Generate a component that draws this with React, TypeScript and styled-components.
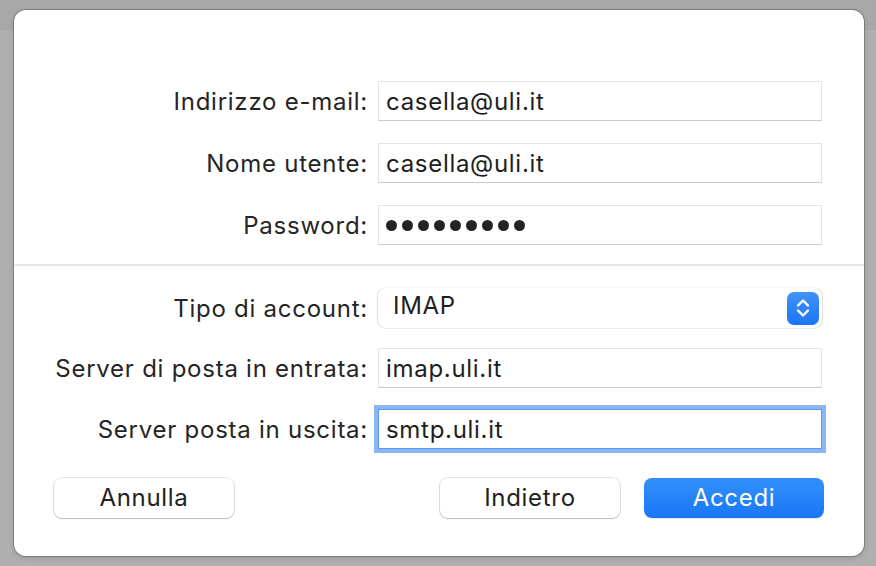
import * as React from "react";
import styled, { createGlobalStyle } from "styled-components";

const GlobalStyle = createGlobalStyle`
  html, body {
    margin: 0;
    padding: 0;
    background: #aaaaaa;
  }
  body {
    font-family: Inter, "Noto Sans", "Liberation Sans", sans-serif;
    -webkit-font-smoothing: antialiased;
  }
`;

const Backdrop = styled.div`
  width: 876px;
  height: 566px;
  box-sizing: border-box;
  padding: 10px 12px 10px 14px;
  background: linear-gradient(#a8a8a8 0, #a8a8a8 30px, #b0b0b0 30px);
`;

const Dialog = styled.div`
  height: 546px;
  box-sizing: border-box;
  background: #ffffff;
  border-radius: 12px;
  box-shadow: 0 0 0 1px rgba(0, 0, 0, 0.22), 0 2px 6px rgba(0, 0, 0, 0.15);
  padding-top: 71px;
  display: flex;
  flex-direction: column;
`;

const Form = styled.div<{ $gap: number }>`
  display: grid;
  grid-template-columns: 314px 444px;
  column-gap: 10px;
  row-gap: ${(p) => p.$gap}px;
  padding-left: 40px;
  align-items: center;
`;

const Label = styled.label`
  text-align: right;
  font-size: 24px;
  letter-spacing: 0.75px;
  color: #252525;
  white-space: nowrap;
`;

const Field = styled.div<{ $focused?: boolean }>`
  height: 40px;
  box-sizing: border-box;
  display: flex;
  align-items: center;
  padding-left: 7px;
  font-size: 24px;
  letter-spacing: 0.7px;
  color: #1e1e1e;
  background: #fff;
  border: 1px solid ${(p) => (p.$focused ? "#5d9bf2" : "#e4e4e4")};
  border-bottom-color: ${(p) => (p.$focused ? "#5d9bf2" : "#c9c9c9")};
  box-shadow: ${(p) => (p.$focused ? "0 0 0 4px #8ab6f6" : "none")};
`;

const Dots = styled.div`
  display: flex;
  gap: 5px;
`;

const Dot = styled.span`
  width: 11px;
  height: 11px;
  border-radius: 50%;
  background: #232323;
`;

const Separator = styled.div`
  height: 2px;
  background: #e6e6e6;
  margin: 19px 0 22px;
`;

const Select = styled.div`
  height: 40px;
  box-sizing: border-box;
  display: flex;
  align-items: center;
  justify-content: space-between;
  padding: 0 3px 0 15px;
  font-size: 24px;
  letter-spacing: 0.7px;
  color: #1e1e1e;
  background: #fff;
  border-radius: 8px;
  box-shadow: -1px 0 1px rgba(0, 0, 0, 0.12), 1px 0 1px rgba(0, 0, 0, 0.12),
    0 1px 1px rgba(0, 0, 0, 0.05);
`;

const SelectValue = styled.span`
  padding-bottom: 5px;
`;

const Stepper = styled.div`
  width: 32px;
  height: 33px;
  border-radius: 7px;
  background: linear-gradient(#4093fa, #1c76f5);
  display: flex;
  align-items: center;
  justify-content: center;
`;

const Buttons = styled.div`
  display: flex;
  padding: 29px 40px 0 40px;
  gap: 24px;
`;

const Spacer = styled.div`
  flex: 1;
`;

const Button = styled.button<{ $primary?: boolean }>`
  width: 180px;
  height: 40px;
  padding-bottom: 2px;
  border-radius: 8px;
  font-family: inherit;
  font-size: 24px;
  letter-spacing: 0.7px;
  border: none;
  color: ${(p) => (p.$primary ? "#ffffff" : "#222222")};
  background: ${(p) =>
    p.$primary ? "linear-gradient(#3390fb, #1877f6)" : "#ffffff"};
  box-shadow: ${(p) =>
    p.$primary
      ? "0 1px 1px rgba(0,0,0,0.1)"
      : "0 0 0 1px rgba(0,0,0,0.1), 0 1px 1.5px rgba(0,0,0,0.18)"};
`;

const App: React.FunctionComponent = () => {
  return (
    <>
      <GlobalStyle />
      <Backdrop>
        <Dialog>
          <Form $gap={22}>
            <Label>Indirizzo e-mail:</Label>
            <Field>casella@uli.it</Field>
            <Label>Nome utente:</Label>
            <Field>casella@uli.it</Field>
            <Label>Password:</Label>
            <Field>
              <Dots>
                {Array.from({ length: 9 }).map((_, i) => (
                  <Dot key={i} />
                ))}
              </Dots>
            </Field>
          </Form>
          <Separator />
          <Form $gap={20}>
            <Label>Tipo di account:</Label>
            <Select>
              <SelectValue>IMAP</SelectValue>
              <Stepper>
                <svg width="18" height="24" viewBox="0 0 18 24" fill="none">
                  <path
                    d="M4 9.5 L9 4.5 L14 9.5 M4 14.5 L9 19.5 L14 14.5"
                    stroke="#fff"
                    strokeWidth="2.4"
                    strokeLinecap="round"
                    strokeLinejoin="round"
                  />
                </svg>
              </Stepper>
            </Select>
            <Label>Server di posta in entrata:</Label>
            <Field>imap.uli.it</Field>
            <Label style={{ marginTop: 1 }}>Server posta in uscita:</Label>
            <Field $focused style={{ marginTop: 1 }}>
              smtp.uli.it
            </Field>
          </Form>
          <Buttons>
            <Button>Annulla</Button>
            <Spacer />
            <Button>Indietro</Button>
            <Button $primary>Accedi</Button>
          </Buttons>
        </Dialog>
      </Backdrop>
    </>
  );
};

export default App;
